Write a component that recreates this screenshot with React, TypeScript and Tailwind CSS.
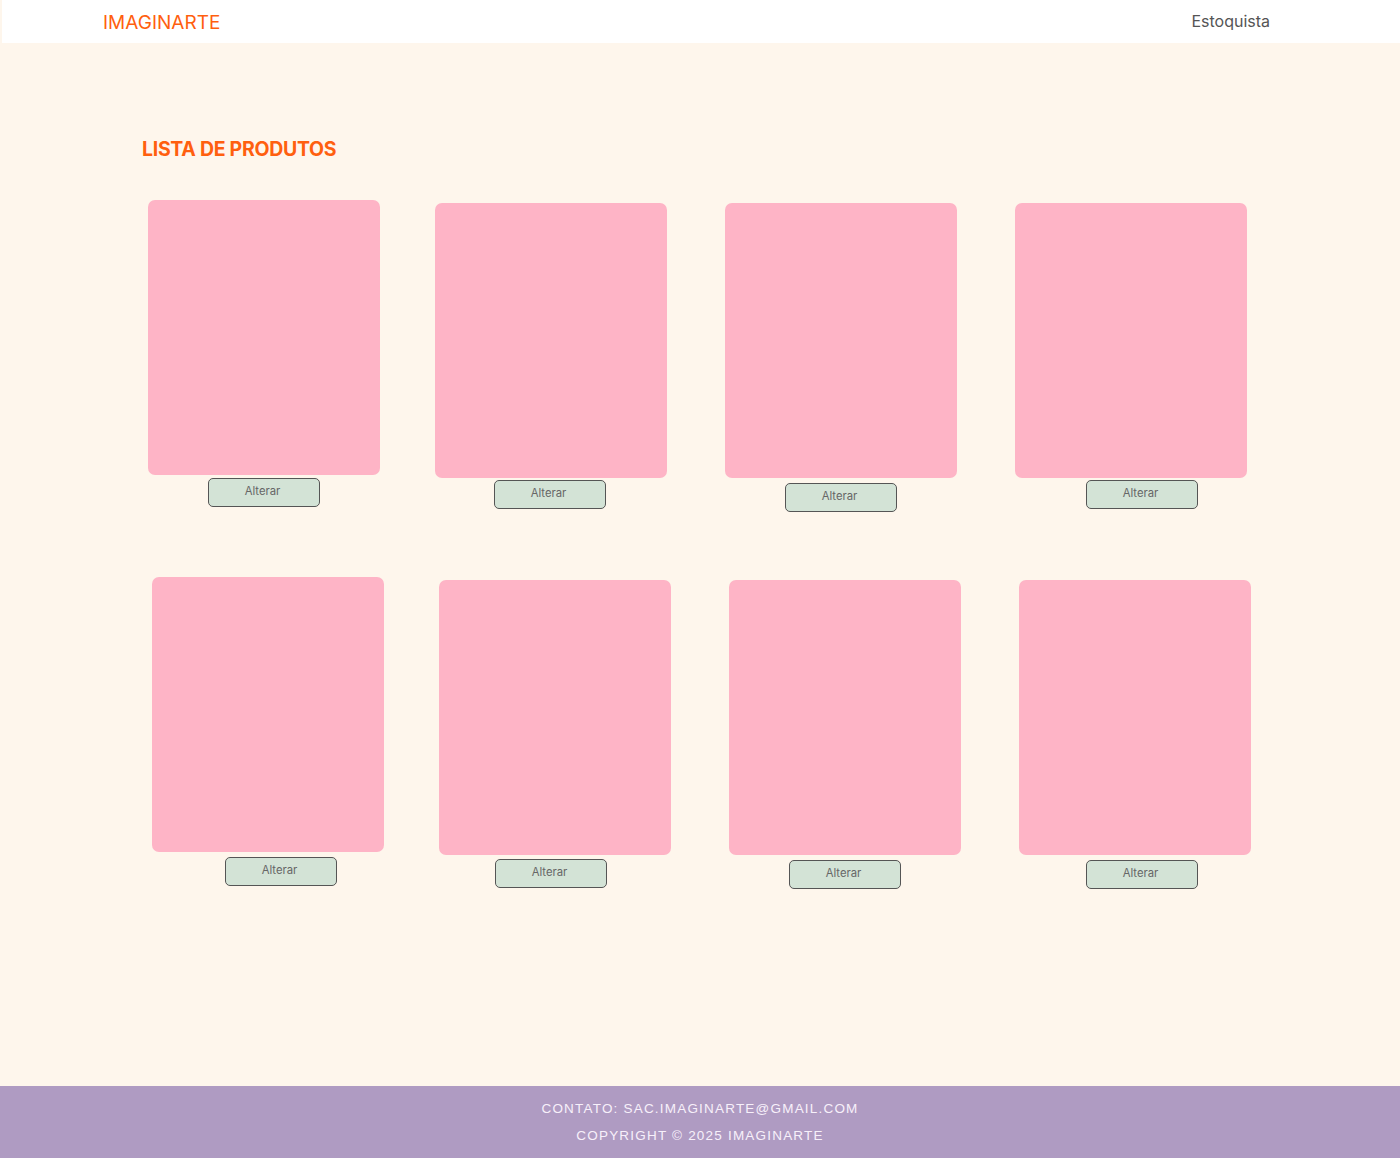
const rows = [
  [
    { wrap: "ml-[148px]", card: "mt-0", btn: "ml-[60px] mt-[3px]" },
    { wrap: "ml-[55px]", card: "mt-[3px]", btn: "ml-[59px] mt-[2px]" },
    { wrap: "ml-[58px]", card: "mt-[3px]", btn: "ml-[60px] mt-[5px]" },
    { wrap: "ml-[58px]", card: "mt-[3px]", btn: "ml-[71px] mt-[2px]" },
  ],
  [
    { wrap: "ml-[152px]", card: "mt-0", btn: "ml-[73px] mt-[5px]" },
    { wrap: "ml-[55px]", card: "mt-[3px]", btn: "ml-[56px] mt-[4px]" },
    { wrap: "ml-[58px]", card: "mt-[3px]", btn: "ml-[60px] mt-[5px]" },
    { wrap: "ml-[58px]", card: "mt-[3px]", btn: "ml-[67px] mt-[5px]" },
  ],
];

function ProductCard({ wrap, card, btn }: { wrap: string; card: string; btn: string }) {
  return (
    <div className={`flex w-[232px] flex-col ${wrap}`}>
      <div className={`h-[275px] w-[232px] rounded-[7px] bg-[#feb4c6] ${card}`} />
      <button
        className={`flex h-[29px] w-[112px] items-center justify-center rounded-[5px] border border-[#555] bg-[#d3e3d6] pb-[2px] pr-[3px] text-[11.3px] text-[#666] ${btn}`}
        type="button"
      >
        Alterar
      </button>
    </div>
  );
}

export default function App() {
  return (
    <div className="flex min-h-screen flex-col bg-[#fef6ec] font-['Inter',sans-serif]">
      <header className="ml-[2px] flex h-[43px] items-center justify-between bg-white pl-[101px] pr-[130px]">
        <span className="pt-[3px] text-[19px] text-[#ff5f0f]">IMAGINARTE</span>
        <span className="pb-[2px] text-[16px] text-[#555]">Estoquista</span>
      </header>

      <main className="flex-1">
        <h1 className="ml-[142px] mt-[92px] text-[19.5px] font-bold leading-[28px] tracking-[-0.3px] text-[#ff5f0f]">
          LISTA DE PRODUTOS
        </h1>

        <div className="mt-[37px] flex flex-col gap-[65px]">
          {rows.map((row, r) => (
            <div className="flex items-start" key={r}>
              {row.map((item, i) => (
                <ProductCard key={i} {...item} />
              ))}
            </div>
          ))}
        </div>
      </main>

      <footer className="flex h-[72px] flex-col items-center justify-center gap-[9px] bg-[#af9bc2] font-['Liberation_Sans',sans-serif] text-[13.5px] leading-[18px] tracking-[1.2px] text-[#f7f0fa]">
        <p>CONTATO: SAC.IMAGINARTE@GMAIL.COM</p>
        <p>COPYRIGHT © 2025 IMAGINARTE</p>
      </footer>
    </div>
  );
}
